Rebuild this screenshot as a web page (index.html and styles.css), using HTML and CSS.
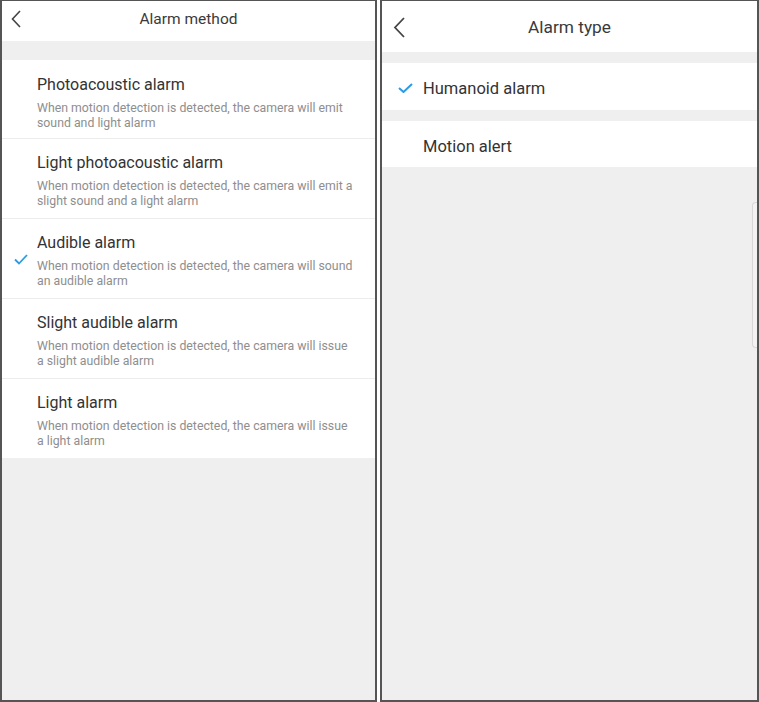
FILE: index.html
```html
<!DOCTYPE html>
<html>
<head>
<meta charset="utf-8">
<link rel="stylesheet" href="styles.css">
</head>
<body>
<div class="screens">
  <section class="panel left">
    <header class="bar bar-sm">
      <svg class="back back-sm" viewBox="0 0 10 18" width="10" height="18"><path d="M9 1 L1.5 9 L9 17" fill="none" stroke="#444" stroke-width="1.6"/></svg>
      <div class="bar-title">Alarm method</div>
    </header>
    <div class="gap gap-lg"></div>
    <ul class="methods">
      <li class="method">
        <div class="mark"></div>
        <div class="text">
          <div class="m-title">Photoacoustic alarm</div>
          <div class="m-desc">When motion detection is detected, the camera will emit sound and light alarm</div>
        </div>
      </li>
      <li class="method">
        <div class="mark"></div>
        <div class="text">
          <div class="m-title">Light photoacoustic alarm</div>
          <div class="m-desc">When motion detection is detected, the camera will emit a slight sound and a light alarm</div>
        </div>
      </li>
      <li class="method">
        <div class="mark">
          <svg viewBox="0 0 14 11" width="14" height="11"><path d="M1 5.5 L5 9.5 L13 1" fill="none" stroke="#2b9be6" stroke-width="1.8"/></svg>
        </div>
        <div class="text">
          <div class="m-title">Audible alarm</div>
          <div class="m-desc">When motion detection is detected, the camera will sound an audible alarm</div>
        </div>
      </li>
      <li class="method">
        <div class="mark"></div>
        <div class="text">
          <div class="m-title">Slight audible alarm</div>
          <div class="m-desc">When motion detection is detected, the camera will issue a slight audible alarm</div>
        </div>
      </li>
      <li class="method">
        <div class="mark"></div>
        <div class="text">
          <div class="m-title">Light alarm</div>
          <div class="m-desc">When motion detection is detected, the camera will issue a light alarm</div>
        </div>
      </li>
    </ul>
  </section>
  <section class="panel right">
    <header class="bar bar-lg">
      <svg class="back back-lg" viewBox="0 0 12 21" width="12" height="21"><path d="M11 1 L2 10.5 L11 20" fill="none" stroke="#444" stroke-width="1.8"/></svg>
      <div class="bar-title big">Alarm type</div>
    </header>
    <div class="gap gap-sm"></div>
    <div class="type">
      <div class="t-mark">
        <svg viewBox="0 0 15 10" width="15" height="10"><path d="M1 5 L5.5 9 L14 1" fill="none" stroke="#2b9be6" stroke-width="2"/></svg>
      </div>
      <div class="t-label">Humanoid alarm</div>
    </div>
    <div class="gap gap-sm"></div>
    <div class="type type-last">
      <div class="t-mark"></div>
      <div class="t-label">Motion alert</div>
    </div>
    <div class="edge-handle"></div>
  </section>
</div>
</body>
</html>
```
FILE: styles.css
```css
html, body {
  margin: 0;
  padding: 0;
  background: #ffffff;
}
body {
  font-family: Roboto, "Liberation Sans", Arial, sans-serif;
  color: #333;
}
.screens {
  display: flex;
  gap: 3px;
  width: 759px;
  height: 702px;
}
.panel {
  box-sizing: border-box;
  height: 702px;
  border: 2px solid #555;
  border-top-width: 1px;
  background: #efefef;
  display: flex;
  flex-direction: column;
  position: relative;
  overflow: hidden;
}
.left { width: 377px; }
.right { width: 379px; }

.bar {
  background: #fff;
  position: relative;
  display: flex;
  align-items: center;
  justify-content: center;
}
.bar-sm { height: 40px; }
.bar-lg { height: 51px; }
.back {
  position: absolute;
  display: block;
}
.back-sm { left: 9px; top: 9px; }
.back-lg { left: 11px; top: 16px; }
.bar-title {
  font-size: 15.5px;
  color: #3a3a3a;
  margin-top: -5px;
}
.bar-title.big {
  font-size: 17.3px;
  margin-top: 0;
}

.gap-lg { height: 19px; }
.gap-sm { height: 11px; }

.methods {
  list-style: none;
  margin: 0;
  padding: 0;
  background: #fff;
}
.method {
  display: flex;
  align-items: flex-start;
  height: 80px;
  box-sizing: border-box;
  border-bottom: 1px solid #ececec;
  padding-top: 14px;
}
.method:first-child { height: 79px; padding-top: 15px; }
.method:last-child { border-bottom: none; height: 79px; }
.mark {
  width: 35px;
  box-sizing: border-box;
  padding-left: 2px;
  flex: none;
  display: flex;
  justify-content: center;
  align-self: center;
  margin-top: -12px;
}
.mark svg { display: block; }
.text {
  flex: 1;
  min-width: 0;
}
.m-title {
  font-size: 16px;
  line-height: 20px;
  color: #333;
  margin-bottom: 6px;
}
.m-desc {
  font-size: 12.3px;
  line-height: 15px;
  color: #8e8e8e;
  padding-right: 21px;
}

.type {
  background: #fff;
  height: 47px;
  display: flex;
  align-items: center;
}
.type-last { height: 46px; }
.t-mark {
  width: 41px;
  flex: none;
  box-sizing: border-box;
  padding-left: 16px;
  display: flex;
  justify-content: flex-start;
}
.t-mark svg { display: block; margin-top: 3px; }
.t-label {
  font-size: 16.5px;
  color: #333;
  padding-top: 4px;
}

.edge-handle {
  position: absolute;
  right: 0;
  top: 201px;
  width: 5px;
  height: 146px;
  box-sizing: border-box;
  border: 1px solid #d8d8d8;
  border-right: none;
  border-radius: 4px 0 0 4px;
  background: #f3f3f3;
}
```
